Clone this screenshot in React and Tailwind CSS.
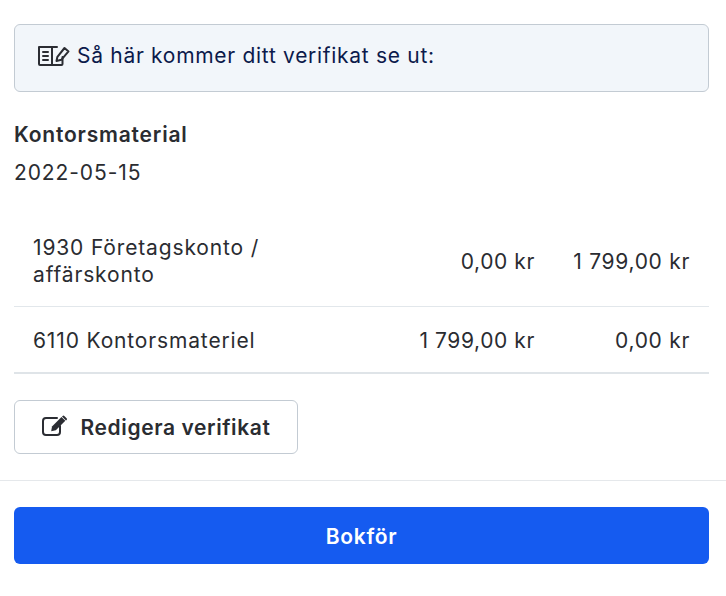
import React from 'react';

function BookEditIcon() {
  return (
    <svg width="33" height="22" viewBox="0 0 33 22" fill="none" stroke="#2b2d33" strokeWidth="2" strokeLinecap="round" strokeLinejoin="round" className="shrink-0">
      <path d="M20 2H2v17a1 1 0 0 0 1 1h21.5a1 1 0 0 0 1-1v-7" />
      <path d="M15 2v18" />
      <path d="M6 7h5M6 11h5M6 15h5" />
      <path d="M19.5 16l.9-4.2L27.5 3l4 3.4-7.2 8.4-4.8 1.2z" />
    </svg>
  );
}

function EditIcon() {
  return (
    <svg width="26" height="22" viewBox="0 0 26 22" fill="none" className="shrink-0 -mt-[4px]">
      <path d="M18 11v6a3 3 0 0 1-3 3H4a3 3 0 0 1-3-3V6a3 3 0 0 1 3-3h11" stroke="#2b2d33" strokeWidth="2" strokeLinecap="round" />
      <path d="M10 11.5l9.5-9.5 3.8 3.8-9.5 9.5-4.6.9.8-4.7z" fill="#2b2d33" />
      <path d="M20.6 1a1.2 1.2 0 0 1 1.7 0l2.3 2.3a1.2 1.2 0 0 1 0 1.7l-.6.6-4-4 .6-.6z" fill="#2b2d33" />
    </svg>
  );
}

const rows = [
  { account: '1930 Företagskonto / affärskonto', debit: '0,00 kr', credit: '1 799,00 kr', style: 'h-[85px] pb-[6px] border-b border-[#e2e7eb]' },
  { account: '6110 Kontorsmateriel', debit: '1 799,00 kr', credit: '0,00 kr', style: 'h-[67px] pt-[2px] border-b-2 border-[#dfe4e8]' },
];

export default function App() {
  return (
    <div className="w-[726px] h-[596px] bg-white text-[#2a2c31] font-['Inter',sans-serif] text-[21px] leading-[28px] tracking-[0.7px] overflow-hidden">
      <div className="pl-[14px] pr-[17px] pt-6">
        <div className="h-[68px] flex items-center gap-[7px] pl-[22px] pb-[4px] bg-[#f2f6fa] border border-[#c3cbd3] rounded-md text-[#0c1a4b]">
          <BookEditIcon />
          <span>Så här kommer ditt verifikat se ut:</span>
        </div>

        <h2 className="mt-[29px] font-semibold tracking-[0.8px]">Kontorsmaterial</h2>
        <p className="mt-[10px] tracking-[0.9px]">2022-05-15</p>

        <div className="mt-[35px] leading-[27px]">
          {rows.map((row) => (
            <div key={row.account} className={`flex items-center px-[19px] ${row.style}`}>
              <div className="w-[300px] tracking-[0.85px]">{row.account}</div>
              <div className="w-[202px] text-right tracking-[0.6px]">{row.debit}</div>
              <div className="flex-1 text-right">{row.credit}</div>
            </div>
          ))}
        </div>

        <button className="mt-[26px] w-[284px] h-[54px] pt-[2px] flex items-center justify-center gap-[13px] bg-white border border-[#c3cbd3] rounded-md font-semibold tracking-[0.6px]">
          <EditIcon />
          <span>Redigera verifikat</span>
        </button>
      </div>

      <div className="mt-[26px] border-t border-[#e5e8eb] pl-[14px] pr-[17px] pt-[26px]">
        <button className="w-full h-[57px] pt-[2px] bg-[#155bf0] rounded-md text-white font-semibold">Bokför</button>
      </div>
    </div>
  );
}
